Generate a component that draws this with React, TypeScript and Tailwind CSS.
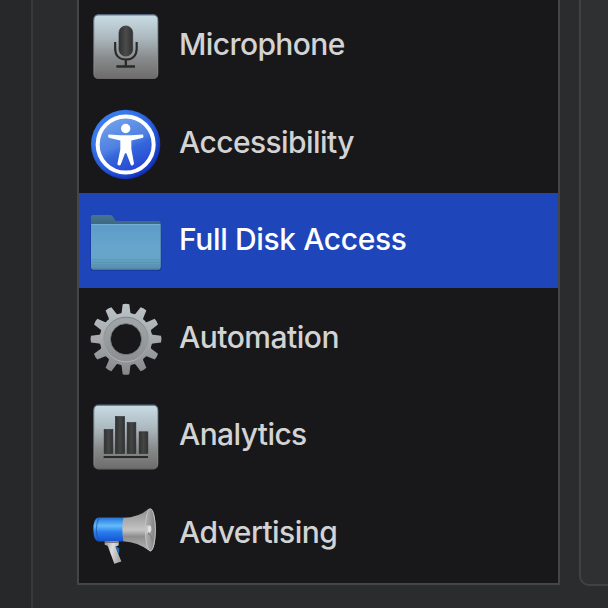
import type { ReactNode } from "react";

function Icon({ top, children }: { top: number; children: ReactNode }) {
  return (
    <svg className="h-[97.5px] w-[100px] shrink-0" viewBox={`0 ${top} 300 292.5`} fill="none" aria-hidden="true">
      {children}
    </svg>
  );
}

function Plate({ id }: { id: string }) {
  return (
    <>
      <defs>
        <linearGradient id={id} x1="0" y1="0" x2="0" y2="1">
          <stop offset="0" stopColor="#c9dce5" />
          <stop offset="0.35" stopColor="#adbac0" />
          <stop offset="0.7" stopColor="#868889" />
          <stop offset="1" stopColor="#6e6c6b" />
        </linearGradient>
        <linearGradient id={`${id}Edge`} x1="0" y1="0" x2="0" y2="1">
          <stop offset="0" stopColor="#5d7188" />
          <stop offset="0.1" stopColor="#93a5b1" />
          <stop offset="0.9" stopColor="#858585" />
          <stop offset="1" stopColor="#686868" />
        </linearGradient>
      </defs>
      <rect x="42" y="44.5" width="191" height="191" rx="13" fill={`url(#${id})`} stroke={`url(#${id}Edge)`} strokeWidth="3.5" />
    </>
  );
}

function MicrophoneIcon() {
  return (
    <Icon top={-6}>
      <Plate id="micPlate" />
      <defs>
        <linearGradient id="mic" x1="0" y1="0" x2="1" y2="0">
          <stop offset="0" stopColor="#303131" />
          <stop offset="0.5" stopColor="#4b4b4b" />
          <stop offset="1" stopColor="#303131" />
        </linearGradient>
      </defs>
      <rect x="117" y="78" width="41" height="90" rx="20" fill="url(#mic)" stroke="#303131" strokeWidth="2" />
      <path d="M105.500 126V146C105.500 168 119 178.500 137.500 178.500S170 168 170 146V126" stroke="#292a2b" strokeWidth="6.500" />
      <path d="M137.500 178V198M109 199.500H165" stroke="#292a2b" strokeWidth="7" />
    </Icon>
  );
}

function AccessibilityIcon() {
  return (
    <Icon top={2.5}>
      <defs>
        <radialGradient id="axRim" cx="0.42" cy="0.4" r="0.62">
          <stop offset="0.6" stopColor="#397bea" />
          <stop offset="0.82" stopColor="#2456d8" />
          <stop offset="1" stopColor="#102bb0" />
        </radialGradient>
        <linearGradient id="axFace" x1="0.2" y1="0" x2="0.65" y2="1">
          <stop offset="0" stopColor="#77a5ea" />
          <stop offset="0.5" stopColor="#4d80e2" />
          <stop offset="0.62" stopColor="#3567da" />
          <stop offset="1" stopColor="#2344d3" />
        </linearGradient>
      </defs>
      <circle cx="137" cy="148" r="104" fill="url(#axRim)" />
      <circle cx="137" cy="148" r="84" fill="url(#axFace)" stroke="#fff" strokeWidth="12" />
      <circle cx="137" cy="100" r="14" fill="#fff" />
      <path d="M86 118L121 120H153L188 118Q193 122 189 128L154 136V161L162 205Q160 213 153 210L139 174H135L122 209Q117 214 112 207L121 162V136L86 128Q82 122 86 118Z" fill="#fff" />
    </Icon>
  );
}

function FolderIcon() {
  return (
    <Icon top={3}>
      <defs>
        <linearGradient id="folderBack" x1="0" y1="0" x2="0" y2="1">
          <stop offset="0" stopColor="#46758d" />
          <stop offset="0.2" stopColor="#3c677f" />
          <stop offset="1" stopColor="#3c677f" />
        </linearGradient>
        <linearGradient id="folderFront" x1="0" y1="0" x2="0" y2="1">
          <stop offset="0" stopColor="#5c9cc8" />
          <stop offset="0.5" stopColor="#66a6cc" />
          <stop offset="0.78" stopColor="#66a5c7" />
          <stop offset="1" stopColor="#568da9" />
        </linearGradient>
      </defs>
      <rect x="31" y="92" width="213" height="145" rx="8" fill="#1838a0" />
      <path d="M33 74Q33 69 38 69H92Q96 69 99 74L105 84Q107 87 112 87H235Q242 87 242 94V225H33Z" fill="url(#folderBack)" />
      <path d="M33 97H242V225Q242 233 234 233H41Q33 233 33 225Z" fill="url(#folderFront)" />
      <path d="M34 98H241" stroke="#7bb5d7" strokeWidth="3" />
      <path d="M34 203H241M34 211H241M34 219H241" stroke="#5591ad" strokeWidth="2" />
      <path d="M38 231H237" stroke="#437e9c" strokeWidth="3" />
    </Icon>
  );
}

const teeth = [0, 30, 60, 90, 120, 150, 180, 210, 240, 270, 300, 330];

function GearIcon() {
  return (
    <Icon top={1.5}>
      <defs>
        <linearGradient id="gear" gradientUnits="userSpaceOnUse" x1="0" y1="40" x2="0" y2="252">
          <stop offset="0" stopColor="#bbc4c9" />
          <stop offset="0.45" stopColor="#a9adaf" />
          <stop offset="1" stopColor="#868788" />
        </linearGradient>
        <linearGradient id="gearRing" x1="0" y1="0" x2="0" y2="1">
          <stop offset="0" stopColor="#7a8186" />
          <stop offset="1" stopColor="#b2b3b4" />
        </linearGradient>
        <mask id="gearMask">
          {teeth.map((angle) => (
            <path key={angle} d="M120 73Q124 70 125 65L128 41Q138 38 148 41L151 65Q152 70 156 73Z" fill="#fff" transform={`rotate(${angle} 138 146)`} />
          ))}
          <circle cx="138" cy="146" r="79" fill="#fff" />
          <circle cx="138" cy="146" r="46" fill="#000" />
        </mask>
      </defs>
      <rect x="25" y="35" width="230" height="222" fill="url(#gear)" mask="url(#gearMask)" />
      <circle cx="138" cy="147" r="67" stroke="url(#gearRing)" strokeWidth="3" />
      <circle cx="138" cy="146" r="57" stroke="#838789" strokeOpacity="0.4" strokeWidth="17" />
      <circle cx="138" cy="146" r="47" stroke="#747879" strokeWidth="3" />
    </Icon>
  );
}

function AnalyticsIcon() {
  return (
    <Icon top={-7}>
      <Plate id="chartPlate" />
      <defs>
        <linearGradient id="bars" x1="0" y1="0" x2="1" y2="0">
          <stop offset="0" stopColor="#303132" />
          <stop offset="0.5" stopColor="#444545" />
          <stop offset="1" stopColor="#303132" />
        </linearGradient>
      </defs>
      <g fill="url(#bars)" stroke="#2b2c2d" strokeWidth="2">
        <rect x="72.500" y="118" width="26" height="71" />
        <rect x="106.500" y="79" width="27" height="110" />
        <rect x="141.500" y="97" width="26" height="92" />
        <rect x="177.500" y="124.500" width="26" height="64.500" />
      </g>
      <path d="M71 200.500H204" stroke="#292929" strokeWidth="7" />
      <path d="M71 205.500H204" stroke="#9a9a9a" strokeWidth="1.500" />
    </Icon>
  );
}

function MegaphoneIcon() {
  return (
    <Icon top={-13.5}>
      <defs>
        <linearGradient id="hornBlue" x1="0" y1="0" x2="0" y2="1">
          <stop offset="0" stopColor="#256dca" />
          <stop offset="0.13" stopColor="#3b91eb" />
          <stop offset="0.35" stopColor="#65bcf8" />
          <stop offset="0.6" stopColor="#287eee" />
          <stop offset="1" stopColor="#1552d2" />
        </linearGradient>
        <linearGradient id="hornGrey" x1="0" y1="0" x2="0" y2="1">
          <stop offset="0" stopColor="#8d8d8d" />
          <stop offset="0.32" stopColor="#b0b0b0" />
          <stop offset="0.5" stopColor="#c4c4c4" />
          <stop offset="0.65" stopColor="#8e8e8e" />
          <stop offset="1" stopColor="#bababa" />
        </linearGradient>
        <linearGradient id="bell" x1="0" y1="0" x2="1" y2="0">
          <stop offset="0" stopColor="#b0b0b0" />
          <stop offset="0.5" stopColor="#9b9b9b" />
          <stop offset="1" stopColor="#808080" />
        </linearGradient>
        <linearGradient id="grip" x1="0" y1="0" x2="1" y2="0.3">
          <stop offset="0" stopColor="#929292" />
          <stop offset="0.5" stopColor="#dedede" />
          <stop offset="1" stopColor="#aaaaaa" />
        </linearGradient>
      </defs>
      <path d="M104 164L118 174L117 191Z" fill="#246bc4" />
      <path d="M74 151H116V165L106 168L124 213L103 220L83 166L74 163Z" fill="url(#grip)" />
      <path d="M75 156H115" stroke="#777" strokeWidth="3" />
      <path d="M54 81H131V153H54Q40 149 40 117T54 81Z" fill="url(#hornBlue)" />
      <path d="M57 82Q49 98 49 117T57 152" stroke="#164b9b" strokeWidth="2" />
      <path d="M130 82Q175 82 207 54Q227 60 227 118T211 183Q175 154 130 152Q124 117 130 82Z" fill="url(#hornGrey)" />
      <ellipse cx="211" cy="118" rx="15" ry="63" fill="url(#bell)" stroke="#c4c4c4" strokeWidth="3" />
      <path d="M199 105H209Q216 117 209 129H199Z" fill="#ccc" />
      <ellipse cx="209" cy="115" rx="5" ry="10" fill="#e1e1e1" />
      <path d="M204 127Q214 133 217 151" stroke="#858585" strokeWidth="4" />
    </Icon>
  );
}

const items = [
  { label: "Microphone", icon: <MicrophoneIcon />, tracking: "tracking-[-0.6px]" },
  { label: "Accessibility", icon: <AccessibilityIcon />, tracking: "tracking-[-0.58px]" },
  { label: "Full Disk Access", icon: <FolderIcon />, tracking: "tracking-[-0.38px]", selected: true },
  { label: "Automation", icon: <GearIcon />, tracking: "tracking-[-0.5px]" },
  { label: "Analytics", icon: <AnalyticsIcon />, tracking: "tracking-[-0.6px]" },
  { label: "Advertising", icon: <MegaphoneIcon />, tracking: "tracking-[-0.55px]" },
];

export default function App() {
  return (
    <div className="flex h-[608px] w-[608px] overflow-hidden bg-[#2b2c2d] font-['Inter',sans-serif]">
      <aside className="w-[33px] shrink-0 border-r-2 border-[#38393a] bg-[#272829]" />
      <main className="ml-[44px] h-[585px] w-[483px] shrink-0 overflow-hidden border-x-2 border-b-2 border-[#444546] bg-[#18181a]">
        <ul className="-mt-[2px]">
          {items.map(({ label, icon, tracking, selected }) => (
            <li key={label} className="h-[97.5px]">
              <div className={`flex h-[95px] pl-px ${selected ? "bg-[#1e45b9] text-white" : "text-[#d3d3d4]"}`}>
                {icon}
                <span className={`-ml-px mt-[27px] whitespace-nowrap text-[30px] leading-[38px] font-[450] ${tracking}`}>{label}</span>
              </div>
            </li>
          ))}
        </ul>
      </main>
      <section className="-mr-4 ml-[19px] h-[586px] w-12 shrink-0 rounded-bl-[10px] border-b-2 border-l-2 border-[#414243] bg-[#2f3032]" />
    </div>
  );
}
